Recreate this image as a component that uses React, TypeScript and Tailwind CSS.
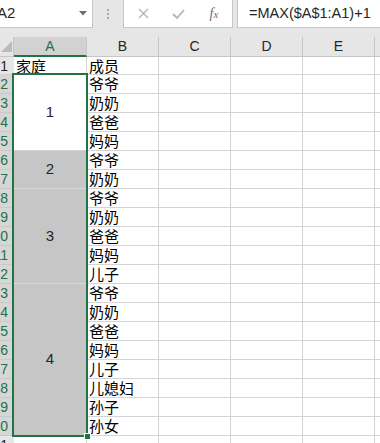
const cjk = "font-['Noto_Sans_CJK_SC','Noto_Sans',sans-serif]";
const latin = "font-['Liberation_Sans','Noto_Sans',sans-serif]";

const members = [
  "成员", "爷爷", "奶奶", "爸爸", "妈妈", "爷爷", "奶奶", "爷爷", "奶奶", "爸爸",
  "妈妈", "儿子", "爷爷", "奶奶", "爸爸", "妈妈", "儿子", "儿媳妇", "孙子", "孙女",
];

const groups = [
  { label: "1", h: "h-[76px]", active: true },
  { label: "2", h: "h-[38px]", active: false },
  { label: "3", h: "h-[95px]", active: false },
  { label: "4", h: "h-[152px]", active: false },
];

const rowH = (i: number) => (i === 0 ? "h-[18px]" : "h-[19px]");

function FormulaBar() {
  return (
    <div className="h-[37px] bg-[#e6e6e6] flex items-start">
      {/* name box */}
      <div className="-mt-px w-[93px] h-[29px] bg-white border border-[#c6c6c6] border-l-0 flex items-center justify-between pr-[5px]">
        <span className={`${latin} -ml-[3px] text-[15px] text-[#262626]`}>A2</span>
        <svg width="8" height="5" viewBox="0 0 8 5">
          <path d="M0 0h8L4 4.5z" fill="#6f6f6f" />
        </svg>
      </div>
      <div className="w-[30px] h-[28px] flex flex-col items-center justify-center gap-[2px]">
        <span className="w-[2px] h-[2px] bg-[#a8a8a8]" />
        <span className="w-[2px] h-[2px] bg-[#a8a8a8]" />
        <span className="w-[2px] h-[2px] bg-[#a8a8a8]" />
      </div>
      <div className="-mt-px w-[110px] h-[29px] bg-white border border-[#c6c6c6] flex items-center">
        <div className="w-[36px] flex justify-center pl-[2px]">
          <svg width="11" height="11" viewBox="0 0 11 11">
            <path d="M1 1l9 9M10 1l-9 9" stroke="#b5b5b5" strokeWidth="1.4" />
          </svg>
        </div>
        <div className="w-[36px] flex justify-center">
          <svg width="13" height="10" viewBox="0 0 13 10">
            <path d="M1 5l4 4 7-8" stroke="#b5b5b5" strokeWidth="1.8" fill="none" />
          </svg>
        </div>
        <div className="w-[36px] flex justify-center">
          <span className="font-['Liberation_Serif',serif] italic text-[14px] text-[#6b6b6b]">
            f<span className="text-[11px]">x</span>
          </span>
        </div>
      </div>
      <div className="ml-[4px] -mt-px flex-1 h-[29px] bg-white border border-[#c6c6c6] border-r-0 flex items-center pl-[11px]">
        <span className={`${latin} text-[14.5px] text-[#262626] whitespace-nowrap`}>=MAX($A$1:A1)+1</span>
      </div>
    </div>
  );
}

function RowHeaders() {
  const nums = Array.from({ length: 21 }, (_, i) => i + 1);
  return (
    <div className="w-[14px] flex flex-col">
      <div className="h-[20px] bg-[#e6e6e6] border-r border-b border-[#c6c6c6] flex items-end justify-end">
        <svg width="13" height="13" viewBox="0 0 13 13" className="mb-[3px]">
          <path d="M1 12h11V1z" fill="#b9b9b9" />
        </svg>
      </div>
      {nums.map((n, i) => {
        const sel = n >= 2 && n <= 20;
        return (
          <div
            key={n}
            className={`${rowH(i)} overflow-hidden border-b ${
              sel ? "bg-[#d6d6d6] text-[#217346] border-[#c9c9c9]" : "bg-[#e6e6e6] text-[#262626] border-[#d0d0d0]"
            } flex items-center`}
          >
            <div className={`${latin} w-[8px] shrink-0 flex justify-end whitespace-nowrap text-[14px] leading-none`}>
              {n}
            </div>
          </div>
        );
      })}
    </div>
  );
}

function ColumnA() {
  return (
    <div className="w-[73px] flex flex-col">
      <div className={`${latin} h-[20px] bg-[#d2d2d2] border-b-2 border-[#217346] border-r border-r-[#c6c6c6] flex items-center justify-center text-[14px] text-[#217346]`}>
        A
      </div>
      <div className={`${cjk} h-[18px] border-r border-b border-[#d4d4d4] flex items-center pl-[2px] text-[15px] leading-[16px] text-black`}>
        家庭
      </div>
      <div className="relative flex flex-col">
        {groups.map((g) => (
          <div
            key={g.label}
            className={`${g.h} border-b border-r ${
              g.active ? "bg-white border-[#d4d4d4]" : "bg-[#c6c6c6] border-[#d9d9d9]"
            } flex items-center justify-center ${latin} text-[15px] text-[#262626]`}
          >
            {g.label}
          </div>
        ))}
        <div className="absolute -left-[2px] -right-px -top-[2px] -bottom-px border-2 border-[#217346] z-10 pointer-events-none" />
        <div className="absolute -right-[4px] -bottom-[4px] w-[7px] h-[7px] bg-[#217346] border border-white z-20" />
      </div>
      <div className="h-[19px] border-r border-[#d4d4d4]" />
    </div>
  );
}

function Column({ letter, cells }: { letter: string; cells: string[] }) {
  return (
    <div className="w-[72px] flex flex-col">
      <div className={`${latin} h-[20px] bg-[#e6e6e6] border-b border-[#c6c6c6] border-r flex items-center justify-center text-[14px] text-[#262626]`}>
        {letter}
      </div>
      {Array.from({ length: 21 }, (_, i) => (
        <div
          key={i}
          className={`${rowH(i)} border-r border-b border-[#d4d4d4] bg-white flex items-center pl-[2px] ${cjk} text-[15px] leading-[16px] text-black whitespace-nowrap`}
        >
          {cells[i] ?? ""}
        </div>
      ))}
    </div>
  );
}

export default function App() {
  return (
    <div className="w-[380px] h-[443px] overflow-hidden bg-white">
      <FormulaBar />
      <div className="flex">
        <RowHeaders />
        <ColumnA />
        <Column letter="B" cells={members} />
        <Column letter="C" cells={[]} />
        <Column letter="D" cells={[]} />
        <Column letter="E" cells={[]} />
        <div className="flex-1 flex flex-col">
          <div className="h-[20px] bg-[#e6e6e6] border-b border-[#c6c6c6]" />
          {Array.from({ length: 21 }, (_, i) => (
            <div key={i} className={`${rowH(i)} border-b border-[#d4d4d4] bg-white`} />
          ))}
        </div>
      </div>
    </div>
  );
}
